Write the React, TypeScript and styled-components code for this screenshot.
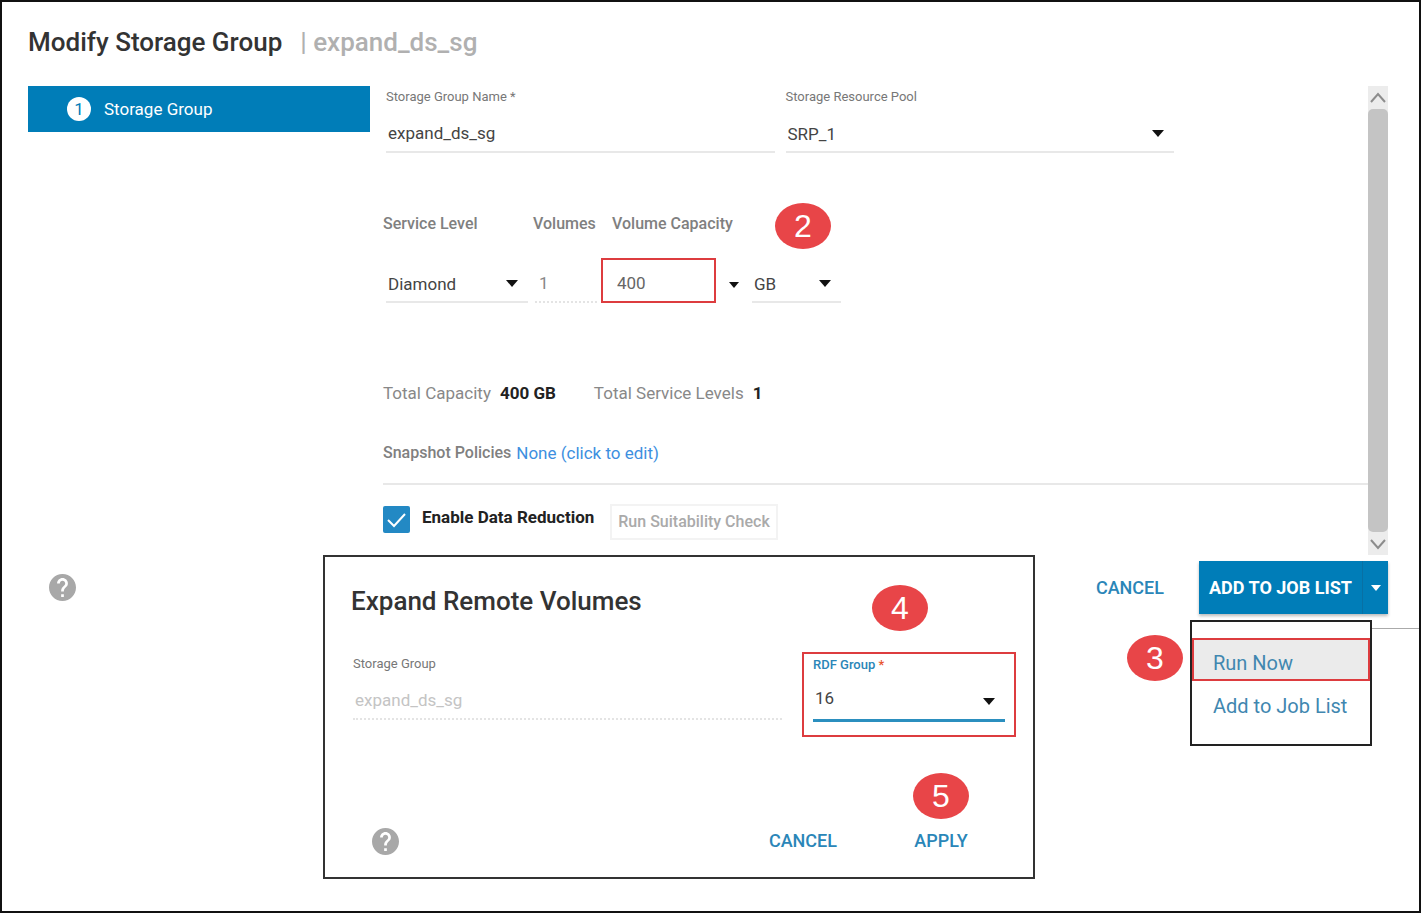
import React from "react";
import styled, { createGlobalStyle, css } from "styled-components";

const BLUE = "#007db8";
const LINK = "#2a86b8";
const RED = "#dd3c3f";

const GlobalStyle = createGlobalStyle`
  * { box-sizing: border-box; }
  body { margin: 0; background: #fff; color: #444; font-family: Roboto, "Liberation Sans", sans-serif; font-size: 17px; line-height: 24px; }
  button, input, select { font: inherit; color: inherit; margin: 0; padding: 0; border: 0; background: none; border-radius: 0; }
  button { cursor: pointer; }
`;

const Page = styled.main`
  min-height: 100vh;
  display: flex;
  flex-direction: column;
  border: 2px solid #111;
`;

const Header = styled.header`
  display: flex;
  align-items: center;
  height: 84px;
  padding: 0 26px 4px;
  font-size: 26px;
  line-height: 32px;
  font-weight: 500;
`;

const Title = styled.h1`
  margin: 0;
  font-size: inherit;
  font-weight: inherit;
  color: #333;
`;

const Subject = styled.span`
  margin-left: 18px;
  color: #b0b0b0;
`;

const Wizard = styled.section`
  display: grid;
  grid-template-columns: 342px minmax(0, 1fr) 20px;
  padding: 0 31px 0 26px;
`;

const Step = styled.button`
  display: flex;
  align-items: center;
  gap: 13px;
  width: 100%;
  height: 46px;
  padding: 0 39px;
  background: ${BLUE};
  color: #fff;
`;

const StepNumber = styled.span`
  display: grid;
  place-items: center;
  width: 24px;
  height: 24px;
  border-radius: 50%;
  background: #fff;
  color: ${BLUE};
`;

const Form = styled.form`
  display: flex;
  flex-direction: column;
  padding-left: 13px;
`;

const NameRow = styled.div`
  display: grid;
  grid-template-columns: 1fr 1fr;
  gap: 11px;
  padding: 0 194px 0 3px;
`;

const Field = styled.div`
  display: flex;
  flex-direction: column;
`;

const FieldLabel = styled.label<{ $active?: boolean }>`
  font-size: 13px;
  line-height: 22px;
  color: ${(p) => (p.$active ? LINK : "#777")};
  font-weight: ${(p) => (p.$active ? 500 : 400)};
`;

const Required = styled.span`
  color: #e8542f;
`;

const underline = css`
  border-bottom: 2px solid #e8e8e8;
`;

const TextInput = styled.input`
  width: 100%;
  height: 45px;
  padding: 7px 2px 0;
  ${underline}
  &:disabled { color: #c4c4c4; border-bottom: 2px dotted #e4e4e4; }
`;

const SelectBox = styled.div<{ $width?: number; $active?: boolean }>`
  position: relative;
  width: ${(p) => (p.$width ? p.$width + "px" : "100%")};
  ${underline}
  ${(p) => p.$active && css`border-bottom: 3px solid #2b8fbf;`}
  select {
    display: block;
    width: 100%;
    height: 43px;
    padding: ${(p) => (p.$active ? "0 2px" : "8px 2px 0")};
    appearance: none;
    outline: 0;
  }
  svg {
    position: absolute;
    right: 10px;
    top: 22px;
    pointer-events: none;
  }
`;

const Caret = ({ size = 12, color = "#111" }: { size?: number; color?: string }) => (
  <svg width={size} height={size / 2 + 1} viewBox="0 0 12 7" fill={color} aria-hidden="true">
    <path d="M0 0h12L6 7z" />
  </svg>
);

const LevelHead = styled.div`
  display: grid;
  grid-template-columns: 150px 79px 163px auto;
  justify-content: start;
  align-items: center;
  height: 46px;
  margin-top: 50px;
  color: #808080;
  font-size: 16px;
  font-weight: 500;
  label { padding-bottom: 5px; }
`;

const Badge = styled.span`
  display: grid;
  place-items: center;
  flex: none;
  width: 56px;
  height: 46px;
  border-radius: 50%;
  background: #e84548;
  color: #fff;
  font-family: "Liberation Sans", sans-serif;
  font-size: 32px;
  font-weight: 400;
  line-height: 44px;
`;

const LevelRow = styled.div`
  display: flex;
  align-items: center;
  height: 45px;
  margin-top: 9px;
  padding-left: 3px;
`;

const VolumeCount = styled.input`
  width: 62px;
  height: 45px;
  margin: 0 4px 0 7px;
  padding: 7px 4px 0;
  border-bottom: 2px dotted #e4e4e4;
  color: #888;
`;

const CapacityInput = styled.input`
  width: 115px;
  height: 45px;
  padding: 5px 14px 0;
  border: 2px solid ${RED};
  color: #666;
`;

const CaretButton = styled.button`
  display: grid;
  place-items: center;
  width: 36px;
  height: 45px;
  padding-top: 8px;
`;

const Totals = styled.dl`
  display: flex;
  margin: 78px 0 0;
  gap: 38px;
  div { display: flex; gap: 9px; }
  dt { color: #888; }
  dd { margin: 0; color: #222; font-weight: 700; }
`;

const Policies = styled.div`
  display: flex;
  gap: 5px;
  height: 44px;
  margin-top: 36px;
  border-bottom: 2px solid #e8e8e8;
  a { color: #3d8fe0; text-decoration: none; }
`;

const PoliciesLabel = styled.span`
  color: #808080;
  font-size: 16px;
  font-weight: 500;
`;

const ReductionRow = styled.div`
  display: flex;
  align-items: center;
  height: 36px;
  margin-top: 19px;
`;

const CheckBox = styled.span`
  display: grid;
  width: 27px;
  height: 27px;
  margin: 0 12px 5px 0;
  > * { grid-area: 1 / 1; }
  input { appearance: none; width: 27px; height: 27px; border-radius: 2px; background: #2389c4; }
  svg { pointer-events: none; }
`;

const CheckLabel = styled.label`
  padding-bottom: 11px;
  color: #222;
  font-weight: 700;
`;

const CheckButton = styled.button`
  height: 36px;
  margin-left: 16px;
  padding: 0 6px;
  border: 2px solid #f3f3f3;
  color: #aaa;
  font-size: 16px;
  font-weight: 500;
`;

const ScrollBar = styled.div`
  display: flex;
  flex-direction: column;
  align-items: center;
  height: 469px;
  background: #ececec;
`;

const Thumb = styled.div`
  flex: 1;
  width: 20px;
  border-radius: 5px;
  background: #c4c4c4;
`;

const Chevron = ({ down }: { down?: boolean }) => (
  <svg width="20" height="23" viewBox="0 0 20 23" fill="none" stroke="#8c8c8c" strokeWidth="2" aria-hidden="true">
    <path d={down ? "M3 8l7 8 7-8" : "M3 16l7-8 7 8"} />
  </svg>
);

const Lower = styled.div`
  display: grid;
  grid-template-columns: 295px minmax(0, 1fr) 384px;
  padding-left: 26px;
`;

const HelpButton = styled.button`
  display: block;
  width: 27px;
  height: 27px;
`;

const HelpCell = styled.div`
  padding: 19px 21px;
`;

const HelpIcon = () => (
  <svg width="27" height="27" viewBox="2 2 20 20" fill="#a8a8a8" aria-hidden="true">
    <path d="M12 2C6.48 2 2 6.48 2 12s4.48 10 10 10 10-4.48 10-10S17.52 2 12 2zm1 17h-2v-2h2v2zm2.07-7.75l-.9.92C13.45 12.9 13 13.5 13 15h-2v-.5c0-1.1.45-2.1 1.17-2.83l1.24-1.26c.37-.36.59-.86.59-1.41 0-1.1-.9-2-2-2s-2 .9-2 2H8c0-2.21 1.79-4 4-4s4 1.79 4 4c0 .88-.36 1.68-.93 2.25z" />
  </svg>
);

const Dialog = styled.section`
  display: flex;
  flex-direction: column;
  height: 324px;
  border: 2px solid #333;
`;

const DialogHead = styled.div`
  display: flex;
  align-items: center;
  justify-content: space-between;
  height: 46px;
  margin-top: 28px;
  padding: 0 105px 0 26px;
`;

const DialogTitle = styled.h2`
  margin: 0 0 14px;
  font-size: 26px;
  line-height: 30px;
  font-weight: 500;
  color: #333;
`;

const DialogFields = styled.div`
  display: flex;
  align-items: flex-start;
  gap: 20px;
  margin-top: 21px;
  padding: 0 17px 0 28px;
  > ${Field} { flex: 1; padding-top: 1px; }
`;

const Highlight = styled.div`
  display: flex;
  flex-direction: column;
  width: 214px;
  height: 85px;
  padding: 0 9px;
  border: 2px solid ${RED};
`;

const DialogFoot = styled.div`
  display: grid;
  grid-template-columns: 1fr auto 56px;
  column-gap: 76px;
  align-items: center;
  margin-top: 36px;
  padding: 0 64px 0 47px;
  ${Badge} { grid-column: 3; }
  ${HelpButton} { grid-column: 1; }
`;

const TextButton = styled.button`
  justify-self: center;
  font-size: 18px;
  line-height: 44px;
  font-weight: 500;
  color: ${LINK};
`;

const ActionBar = styled.div`
  display: flex;
  justify-content: flex-end;
  align-items: center;
  gap: 35px;
  padding: 6px 31px 6px 0;
`;

const SplitButton = styled.div`
  display: flex;
  height: 53px;
  background: ${BLUE};
  box-shadow: 0 2px 3px #bbb;
  color: #fff;
  button { display: grid; place-items: center; font-size: 18px; font-weight: 700; }
  button:first-child { width: 163px; }
  button:last-child { width: 26px; border-left: 1px solid #0870a4; }
`;

const MenuRow = styled.div`
  display: flex;
  align-items: flex-start;
  justify-content: flex-end;
  ${Badge} { margin: 15px 7px 0 0; }
`;

const Menu = styled.div`
  display: flex;
  flex-direction: column;
  width: 182px;
  height: 126px;
  padding-top: 16px;
  border: 2px solid #222;
`;

const MenuItem = styled.button<{ $selected?: boolean }>`
  height: 43px;
  padding: 6px 19px 0;
  border: 2px solid ${(p) => (p.$selected ? RED : "transparent")};
  background: ${(p) => (p.$selected ? "#ebebeb" : "transparent")};
  color: #4187b0;
  font-size: 20px;
  text-align: left;
`;

const PanelEdge = styled.div`
  width: 47px;
  margin-top: 8px;
  border-top: 1px solid #aaa;
`;

export default function App() {
  return (
    <>
      <GlobalStyle />
      <Page>
        <Header>
          <Title>Modify Storage Group</Title>
          <Subject>| expand_ds_sg</Subject>
        </Header>

        <Wizard>
          <nav>
            <Step type="button">
              <StepNumber>1</StepNumber>
              Storage Group
            </Step>
          </nav>
          <Form>
            <NameRow>
              <Field>
                <FieldLabel htmlFor="name">Storage Group Name *</FieldLabel>
                <TextInput id="name" defaultValue="expand_ds_sg" />
              </Field>
              <Field>
                <FieldLabel htmlFor="pool">Storage Resource Pool</FieldLabel>
                <SelectBox>
                  <select id="pool"><option>SRP_1</option></select>
                  <Caret />
                </SelectBox>
              </Field>
            </NameRow>

            <LevelHead>
              <label htmlFor="level">Service Level</label>
              <label htmlFor="volumes">Volumes</label>
              <label htmlFor="capacity">Volume Capacity</label>
              <Badge>2</Badge>
            </LevelHead>
            <LevelRow>
              <SelectBox $width={142}>
                <select id="level"><option>Diamond</option></select>
                <Caret />
              </SelectBox>
              <VolumeCount id="volumes" defaultValue="1" />
              <CapacityInput id="capacity" defaultValue="400" />
              <CaretButton type="button" aria-label="Capacity presets"><Caret size={10} /></CaretButton>
              <SelectBox $width={89}>
                <select aria-label="Capacity unit"><option>GB</option></select>
                <Caret />
              </SelectBox>
            </LevelRow>

            <Totals>
              <div><dt>Total Capacity</dt><dd>400 GB</dd></div>
              <div><dt>Total Service Levels</dt><dd>1</dd></div>
            </Totals>
            <Policies>
              <PoliciesLabel>Snapshot Policies</PoliciesLabel>
              <a href="#policies">None (click to edit)</a>
            </Policies>
            <ReductionRow>
              <CheckBox>
                <input id="reduction" type="checkbox" defaultChecked />
                <svg width="27" height="27" viewBox="0 0 27 27" fill="none" stroke="#fff" strokeWidth="2" aria-hidden="true">
                  <path d="M5 14l6 6L22 8" />
                </svg>
              </CheckBox>
              <CheckLabel htmlFor="reduction">Enable Data Reduction</CheckLabel>
              <CheckButton type="button">Run Suitability Check</CheckButton>
            </ReductionRow>
          </Form>
          <ScrollBar>
            <Chevron />
            <Thumb />
            <Chevron down />
          </ScrollBar>
        </Wizard>

        <Lower>
          <HelpCell>
            <HelpButton type="button" aria-label="Help"><HelpIcon /></HelpButton>
          </HelpCell>

          <Dialog aria-labelledby="dialog-title">
            <DialogHead>
              <DialogTitle id="dialog-title">Expand Remote Volumes</DialogTitle>
              <Badge>4</Badge>
            </DialogHead>
            <DialogFields>
              <Field>
                <FieldLabel htmlFor="group">Storage Group</FieldLabel>
                <TextInput id="group" defaultValue="expand_ds_sg" disabled />
              </Field>
              <Highlight>
                <FieldLabel htmlFor="rdf" $active>RDF Group <Required>*</Required></FieldLabel>
                <SelectBox $active>
                  <select id="rdf"><option>16</option></select>
                  <Caret />
                </SelectBox>
              </Highlight>
            </DialogFields>
            <DialogFoot>
              <Badge>5</Badge>
              <HelpButton type="button" aria-label="Dialog help"><HelpIcon /></HelpButton>
              <TextButton type="button">CANCEL</TextButton>
              <TextButton type="button">APPLY</TextButton>
            </DialogFoot>
          </Dialog>

          <div>
            <ActionBar>
              <TextButton type="button">CANCEL</TextButton>
              <SplitButton>
                <button type="button">ADD TO JOB LIST</button>
                <button type="button" aria-label="More job actions"><Caret size={10} color="#fff" /></button>
              </SplitButton>
            </ActionBar>
            <MenuRow>
              <Badge>3</Badge>
              <Menu>
                <MenuItem type="button" $selected>Run Now</MenuItem>
                <MenuItem type="button">Add to Job List</MenuItem>
              </Menu>
              <PanelEdge />
            </MenuRow>
          </div>
        </Lower>
      </Page>
    </>
  );
}
